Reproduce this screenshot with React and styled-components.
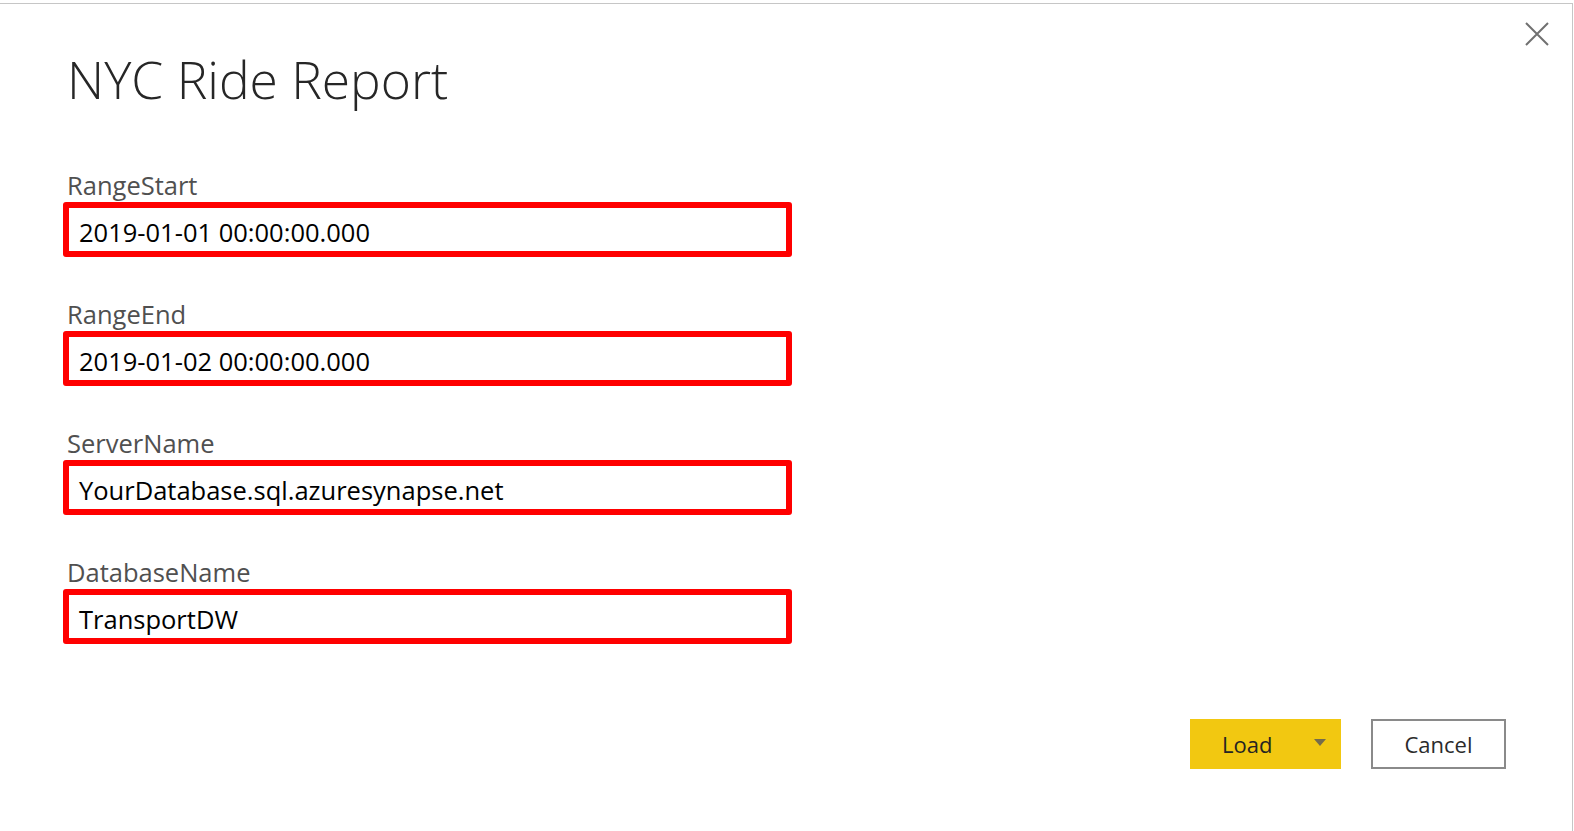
import React from 'react';
import styled, { createGlobalStyle } from 'styled-components';

const GlobalStyle = createGlobalStyle`
  html, body {
    margin: 0;
    padding: 0;
    background: #ffffff;
    overflow: hidden;
  }
  * {
    box-sizing: border-box;
  }
`;

const fields = [
  { name: 'RangeStart', value: '2019-01-01 00:00:00.000' },
  { name: 'RangeEnd', value: '2019-01-02 00:00:00.000' },
  { name: 'ServerName', value: 'YourDatabase.sql.azuresynapse.net' },
  { name: 'DatabaseName', value: 'TransportDW' },
];

const App = () => {
  return (
    <>
      <GlobalStyle />
      <Dialog>
        <Header>
          <Title>NYC Ride Report</Title>
          <CloseButton aria-label="Close">
            <svg width="24" height="24" viewBox="0 0 24 24">
              <path d="M1 1 L23 23 M23 1 L1 23" stroke="#707070" strokeWidth="2" fill="none" />
            </svg>
          </CloseButton>
        </Header>
        <Body>
          {fields.map(f => (
            <Field key={f.name}>
              <Label>{f.name}</Label>
              <InputBox>{f.value}</InputBox>
            </Field>
          ))}
        </Body>
        <Footer>
          <LoadButton>
            <span>Load</span>
            <Caret />
          </LoadButton>
          <CancelButton>Cancel</CancelButton>
        </Footer>
      </Dialog>
    </>
  );
};

export default App;

const Dialog = styled.div`
  margin-top: 3px;
  width: 1573px;
  height: 828px;
  border-top: 1px solid #c6c6c6;
  border-right: 1px solid #c6c6c6;
  background: #ffffff;
  display: flex;
  flex-direction: column;
  font-family: "Open Sans", "Noto Sans", sans-serif;
`;

const Header = styled.div`
  display: flex;
  justify-content: space-between;
  align-items: flex-start;
  padding: 0 23px 0 67px;
`;

const Title = styled.h1`
  margin: 43px 0 0 0;
  font-size: 51.5px;
  line-height: 64px;
  font-weight: 300;
  color: #262626;
`;

const CloseButton = styled.div`
  margin-top: 18px;
  width: 24px;
  height: 24px;
  display: flex;
  svg {
    display: block;
  }
`;

const Body = styled.div`
  display: flex;
  flex-direction: column;
  gap: 42px;
  padding-left: 63px;
  margin-top: 59px;
`;

const Field = styled.div`
  display: flex;
  flex-direction: column;
  gap: 2px;
`;

const Label = styled.div`
  padding-left: 4px;
  font-size: 25.5px;
  line-height: 30px;
  color: #505050;
`;

const InputBox = styled.div`
  width: 729px;
  height: 55px;
  border: 6px solid #ff0000;
  border-radius: 3px;
  padding: 5px 10px 0 10px;
  font-size: 25.5px;
  line-height: 38px;
  color: #000000;
  white-space: nowrap;
`;

const Footer = styled.div`
  display: flex;
  justify-content: flex-end;
  gap: 30px;
  margin-top: 75px;
  padding-right: 66px;
`;

const LoadButton = styled.div`
  width: 151px;
  height: 50px;
  background: #f2c811;
  display: flex;
  align-items: center;
  justify-content: space-between;
  padding: 0 15px 0 32px;
  font-size: 22px;
  color: #252423;
`;

const Caret = styled.span`
  width: 0;
  height: 0;
  border-left: 6.5px solid transparent;
  border-right: 6.5px solid transparent;
  border-top: 7px solid #756c4c;
  margin-top: -4px;
`;

const CancelButton = styled.div`
  width: 135px;
  height: 50px;
  border: 2px solid #8a8a8a;
  background: #ffffff;
  display: flex;
  align-items: center;
  justify-content: center;
  font-size: 22px;
  color: #2b2b2b;
`;
